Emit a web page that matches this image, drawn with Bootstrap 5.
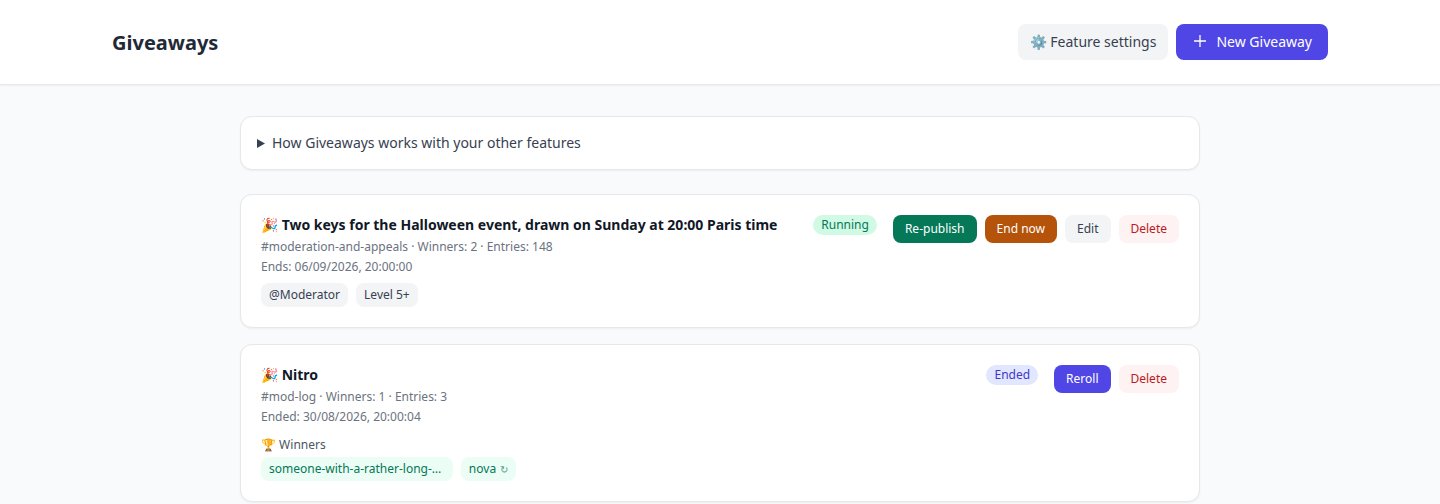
<!DOCTYPE html>
<html lang="en">
<head>
<meta charset="UTF-8">
<title>Giveaways</title>
<link href="https://cdn.jsdelivr.net/npm/bootstrap@5.3.0/dist/css/bootstrap.min.css" rel="stylesheet">
<style>
body { background: #f9fafb; font-family: "Noto Sans", sans-serif; color: #1f2937; font-size: 14px; }
.top-head { background: #fff; height: 85px; border-bottom: 1px solid #e5e7eb; box-shadow: 0 1px 2px rgba(0,0,0,.05); padding: 0 112px; }
.top-head h1 { font-size: 20px; font-weight: 700; line-height: 28px; margin: 1px 0 0; color: #1f2937; }
.head-btn { height: 36px; border-radius: 8px; font-size: 14px; font-weight: 400; border: 0; padding: 0 12px 2px; display: inline-flex; align-items: center; }
.head-settings { background: #f3f4f6; color: #374151; }
.head-new { background: #4f46e5; color: #fff; padding: 0 16px 2px; gap: 8px; }
.page-wrap { width: 960px; margin: 0 auto; padding-top: 31px; }
.info-box, .gw-card { background: #fff; border: 1px solid #e5e7eb; border-radius: 12px; box-shadow: 0 1px 2px rgba(0,0,0,.05); }
.info-box { height: 54px; padding: 0 16px 2px; margin-bottom: 24px; color: #374151; }
.info-tri { margin: 2px 7px 0 0; }
.gw-card { padding: 20px; margin-bottom: 16px; }
.gw-title { font-size: 14px; font-weight: 700; color: #111827; line-height: 20px; }
.gw-meta { font-size: 12px; color: #6b7280; line-height: 16px; margin-top: 4px; }
.gw-pill { font-size: 12px; line-height: 16px; border-radius: 999px; padding: 2px 8px; font-weight: 400; }
.pill-run { background: #d1fae5; color: #047857; }
.pill-end { background: #e0e7ff; color: #4338ca; }
.gw-btn { font-size: 12px; font-weight: 400; height: 28px; border: 0; border-radius: 8px; padding: 0 12px; }
.b-green { background: #047857; color: #fff; }
.b-amber { background: #b45309; color: #fff; }
.b-gray { background: #f3f4f6; color: #374151; }
.b-red { background: #fef2f2; color: #b91c1c; }
.b-indigo { background: #4f46e5; color: #fff; }
.gw-tag { font-size: 12px; line-height: 16px; padding: 4px 8px; border-radius: 8px; background: #f3f4f6; color: #374151; }
.tag-win { background: #ecfdf5; color: #047857; }
.tag-long { padding-right: 11.5px; }
.tag-redo { font-size: 10px; opacity: .7; margin-left: 1px; }
.win-label { font-size: 12px; line-height: 16px; color: #4b5563; margin-top: 12px; }
</style>
</head>
<body>
<header class="top-head d-flex align-items-center justify-content-between">
  <h1>Giveaways</h1>
  <div class="d-flex gap-2">
    <button class="head-btn head-settings">⚙️ Feature settings</button>
    <button class="head-btn head-new"><svg width="16" height="16" viewBox="0 0 16 16" fill="none" stroke="#fff" stroke-width="1.3"><path d="M8 2v12M2 8h12"/></svg> New Giveaway</button>
  </div>
</header>
<main class="page-wrap">
  <div class="info-box d-flex align-items-center"><svg class="info-tri" width="8" height="9" viewBox="0 0 8 9"><path d="M0 0l8 4.5L0 9z" fill="#374151"/></svg>How Giveaways works with your other features</div>
  <div class="gw-card d-flex justify-content-between">
    <div>
      <div class="gw-title">🎉 Two keys for the Halloween event, drawn on Sunday at 20:00 Paris time</div>
      <div class="gw-meta">#moderation-and-appeals · Winners: 2 · Entries: 148</div>
      <div class="gw-meta">Ends: 06/09/2026, 20:00:00</div>
      <div class="d-flex gap-2 mt-2"><span class="gw-tag">@Moderator</span><span class="gw-tag">Level 5+</span></div>
    </div>
    <div class="d-flex align-items-start">
      <span class="gw-pill pill-run me-3">Running</span>
      <div class="d-flex gap-2">
        <button class="gw-btn b-green">Re-publish</button>
        <button class="gw-btn b-amber">End now</button>
        <button class="gw-btn b-gray">Edit</button>
        <button class="gw-btn b-red">Delete</button>
      </div>
    </div>
  </div>
  <div class="gw-card d-flex justify-content-between">
    <div>
      <div class="gw-title">🎉 Nitro</div>
      <div class="gw-meta">#mod-log · Winners: 1 · Entries: 3</div>
      <div class="gw-meta">Ended: 30/08/2026, 20:00:04</div>
      <div class="win-label">🏆 Winners</div>
      <div class="d-flex gap-2 mt-1"><span class="gw-tag tag-win tag-long">someone-with-a-rather-long-…</span><span class="gw-tag tag-win">nova <span class="tag-redo">↻</span></span></div>
    </div>
    <div class="d-flex align-items-start">
      <span class="gw-pill pill-end me-3">Ended</span>
      <div class="d-flex gap-2">
        <button class="gw-btn b-indigo">Reroll</button>
        <button class="gw-btn b-red">Delete</button>
      </div>
    </div>
  </div>
</main>
<script src="https://cdn.jsdelivr.net/npm/bootstrap@5.3.0/dist/js/bootstrap.bundle.min.js"></script>
</body>
</html>
